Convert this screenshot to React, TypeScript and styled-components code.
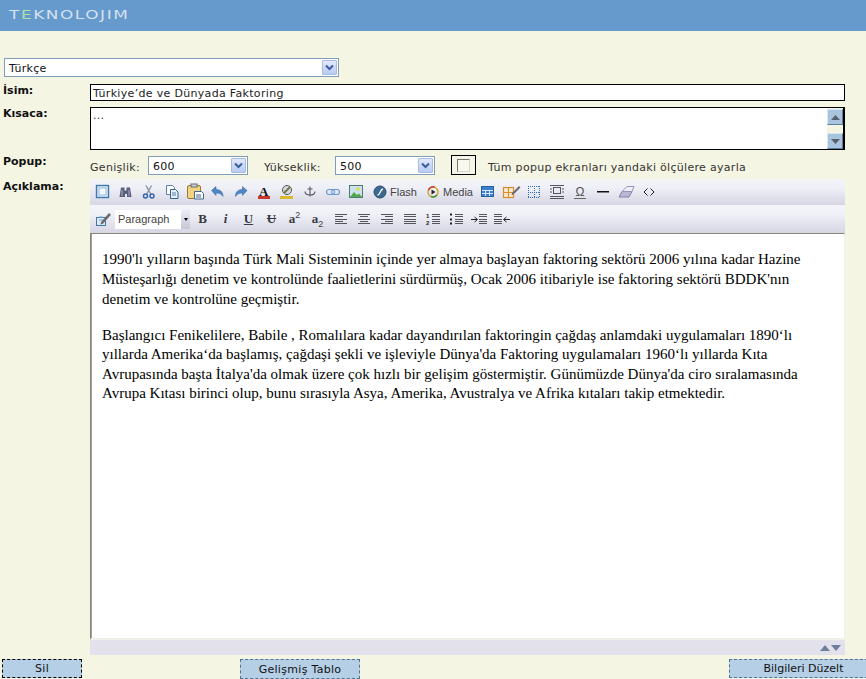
import React from "react";
import styled, { createGlobalStyle } from "styled-components";

const Global = createGlobalStyle`
  html, body { margin: 0; padding: 0; overflow: hidden; background: #f5f5e3; }
  body { font-family: "DejaVu Sans", Verdana, sans-serif; font-size: 11px; color: #222; }
  * { box-sizing: border-box; }
`;

const Page = styled.div`
  width: 866px;
  height: 679px;
  overflow: hidden;
  display: flex;
  flex-direction: column;
`;
const Header = styled.header`
  height: 31px;
  flex: none;
  background: #6699cc;
  padding: 7px 0 0 9px;
`;
const Logo = styled.div`
  font-family: "DejaVu Sans", sans-serif;
  font-weight: 400;
  font-size: 13px;
  line-height: 16px;
  letter-spacing: 1.2px;
  color: #d4e2f0;
  transform: scaleX(1.3);
  transform-origin: left center;
  & > span { color: #aee0a8; }
`;
const Content = styled.main`
  display: flex;
  flex-direction: column;
  padding-top: 27px;
`;
const FakeSelect = styled.div<{ $w: number }>`
  width: ${(p) => p.$w}px;
  height: 19px;
  flex: none;
  border: 1px solid #7f9db9;
  background: #fff;
  display: flex;
  align-items: center;
  justify-content: space-between;
  padding: 1px 1px 1px 4px;
  font-size: 11px;
  letter-spacing: 0.3px;
  color: #111;
`;
const SelectValue = styled.span`
  margin-top: 2px;
`;
const SelectArrow = styled.span`
  width: 15px;
  height: 15px;
  border: 1px solid #a9bcdf;
  border-radius: 1px;
  background: linear-gradient(#e1e9fb, #b9cbf3);
  display: flex;
  align-items: center;
  justify-content: center;
`;
const LangRow = styled.div`
  padding-left: 4px;
`;
const Row = styled.div<{ $mt: number }>`
  display: flex;
  align-items: flex-start;
  margin-top: ${(p) => p.$mt}px;
`;
const Label = styled.label<{ $top?: number }>`
  width: 90px;
  flex: none;
  padding-left: 3px;
  padding-top: ${(p) => p.$top ?? 0}px;
  font-weight: 700;
  font-size: 11px;
  line-height: 13px;
  color: #111;
`;
const TextInput = styled.input`
  width: 755px;
  height: 17px;
  border: 1px solid #000;
  padding: 2px 2px 0;
  background: #fff;
  font: 11px "DejaVu Sans", sans-serif;
  letter-spacing: 0.32px;
  color: #222;
  outline: none;
  display: block;
`;
const AreaBox = styled.div`
  width: 755px;
  height: 43px;
  border: 1px solid #000;
  background: #fff;
  display: flex;
`;
const Area = styled.textarea`
  flex: 1;
  border: 0;
  resize: none;
  outline: none;
  overflow: hidden;
  padding: 1px 2px;
  font: 11px "DejaVu Sans", sans-serif;
  letter-spacing: 0.3px;
  color: #333;
`;
const ScrollTrack = styled.div`
  width: 17px;
  flex: none;
  background: #f5f5e3;
  border-right: 1px solid #000;
  padding-top: 1px;
  display: flex;
  flex-direction: column;
  justify-content: space-between;
`;
const ScrollBtn = styled.div`
  height: 16px;
  background: #a9c4df;
  border: 1px solid;
  border-color: #dbe7f2 #5d7e9e #5d7e9e #dbe7f2;
  display: flex;
  align-items: center;
  justify-content: center;
`;
const PopupControls = styled.div`
  display: flex;
  align-items: center;
  height: 20px;
`;
const FieldText = styled.span<{ $ml?: number; $w?: number }>`
  margin-left: ${(p) => p.$ml ?? 0}px;
  width: ${(p) => (p.$w ? `${p.$w}px` : "auto")};
  flex: none;
  font-size: 11px;
  letter-spacing: 0.3px;
  color: #333;
  white-space: nowrap;
  padding-top: 4px;
`;
const CheckFrame = styled.span`
  width: 25px;
  height: 20px;
  margin-left: 16px;
  flex: none;
  border: 1px solid #000;
  display: flex;
  align-items: center;
  justify-content: center;
`;
const CheckBox = styled.span`
  width: 13px;
  height: 13px;
  background: #f8f8f0;
  border: 1px solid;
  border-color: #777 #d8d8d0 #d8d8d0 #777;
  display: block;
`;
const Editor = styled.div`
  width: 755px;
  display: flex;
  flex-direction: column;
`;
const ToolRow = styled.div<{ $h: number }>`
  height: ${(p) => p.$h}px;
  display: flex;
  align-items: center;
  padding-left: 1px;
  background: linear-gradient(#f4f4fa, #efeff7 35%, #d6d6e4);
`;
const ToolBtn = styled.span<{ $w?: number }>`
  width: ${(p) => p.$w ?? 23}px;
  height: 22px;
  flex: none;
  display: flex;
  align-items: center;
  justify-content: center;
  gap: 2px;
  font: 11px "Liberation Sans", Arial, sans-serif;
  color: #444;
`;
const ToolLetter = styled.span<{ $italic?: boolean; $under?: boolean; $strike?: boolean }>`
  font: bold 13px "Liberation Serif", serif;
  font-style: ${(p) => (p.$italic ? "italic" : "normal")};
  text-decoration: ${(p) => (p.$under ? "underline" : p.$strike ? "line-through" : "none")};
  color: #3a3a42;
  & sup, & sub { font: 9px "Liberation Sans", sans-serif; line-height: 0; color: #444; }
`;
const FormatSelect = styled.span`
  width: 75px;
  height: 19px;
  margin: 0 1px;
  flex: none;
  background: #fff;
  display: flex;
  align-items: center;
  justify-content: space-between;
  padding-left: 3px;
  font: 11px "Liberation Sans", Arial, sans-serif;
  color: #444;
`;
const FormatArrow = styled.span`
  width: 9px;
  height: 100%;
  background: linear-gradient(#ecedf4, #c5c6d6);
  display: flex;
  align-items: center;
  justify-content: center;
  &::after {
    content: "";
    border: 2.5px solid transparent;
    border-top: 3px solid #000;
    border-bottom: 0;
  }
`;
const Doc = styled.div`
  height: 407px;
  background: #fff;
  border: 1px solid;
  border-width: 1px 1px 2px 1px;
  border-color: #85857a #f0f0e6 #f0f0e6 #85857a;
  box-shadow: inset 1px 0 0 #a0a098;
  padding: 15px 20px 0 11px;
  font: 15px/20px "Liberation Serif", "Times New Roman", serif;
  color: #000;
  overflow: hidden;
`;
const Para = styled.p<{ $mt?: number }>`
  margin: ${(p) => p.$mt ?? 0}px 0 0 0;
`;
const Tight = styled(Para)`
  line-height: 19.3px;
`;
const Status = styled.div`
  height: 15px;
  background: #e3e2ec;
  display: flex;
  align-items: center;
  justify-content: flex-end;
  gap: 1px;
  padding-right: 4px;
`;
const Footer = styled.footer`
  display: flex;
  margin-top: 4px;
`;
const ActionButton = styled.button<{ $w: number; $ml: number; $dark?: boolean; $h?: number; $ls?: number }>`
  width: ${(p) => p.$w}px;
  height: ${(p) => p.$h ?? 20}px;
  margin-left: ${(p) => p.$ml}px;
  flex: none;
  background: #b5cfe6;
  border: 1px dashed ${(p) => (p.$dark ? "#000" : "#4f7590")};
  font: 11px "DejaVu Sans", sans-serif;
  letter-spacing: ${(p) => p.$ls ?? 0.3}px;
  color: #111;
  padding: 0;
  text-align: center;
`;

const Svg = styled.svg`
  display: block;
  flex: none;
`;

const I: React.FC<{ children: React.ReactNode; w?: number }> = ({ children, w = 20 }) => (
  <Svg width={w} height={20} viewBox={`0 0 ${w} 20`} fill="none">
    {children}
  </Svg>
);

const lines = (rows: [number, number, number][], color = "#55555e") =>
  rows.map(([x1, x2, y], i) => <path key={i} d={`M${x1} ${y + 0.5}H${x2}`} stroke={color} />);

const Row1: { key: string; w?: number; label?: string; icon: React.ReactNode }[] = [
  { key: "fullscreen", icon: <I><rect x="3.5" y="3.5" width="12" height="12" fill="#dbe8f6" stroke="#3f78ad" strokeWidth="1.4" /><rect x="6" y="6" width="7" height="7" fill="#f4f8fd" stroke="#9dbcd9" /></I> },
  { key: "find", icon: <I><path d="M5 5.500h3.500v3h2v-3H14l1.500 9.500h-4.500v-3H9v3H3.500z" fill="#5a5f7c" /><path d="M6 8v6M13 8v6" stroke="#a6abc8" /></I> },
  { key: "cut", icon: <I><path d="M7 3.500l5 9M12.500 3.500l-5 9" stroke="#8b93a8" strokeWidth="1.400" /><circle cx="6.500" cy="14" r="2" stroke="#3366b0" strokeWidth="1.500" /><circle cx="13" cy="14" r="2" stroke="#3366b0" strokeWidth="1.500" /></I> },
  { key: "copy", icon: <I><path d="M4.500 3.500h6l2 2v7h-8z" fill="#fff" stroke="#5f7fa8" /><path d="M8.500 7.500h5l2.500 2.500v6.500H8.500z" fill="#e9f0fa" stroke="#39638f" /><path d="M10 11h4M10 13h4" stroke="#5f7fa8" /></I> },
  { key: "paste", icon: <I w={22}><rect x="3.500" y="3.500" width="13" height="13" rx="1.500" fill="#f1d382" stroke="#9a7a34" /><rect x="7" y="2" width="6" height="3" fill="#c9cfd8" stroke="#6a6a6a" /><path d="M10.500 9.500h7l2 2v5.500h-9z" fill="#fff" stroke="#47668f" /><path d="M12 13h5M12 15h5" stroke="#47668f" /></I> },
  { key: "undo", icon: <I><path d="M3.500 8.500L8 4.500v3c4 0 7 2 7 7-1.500-2.500-3.500-3.500-7-3.500v2.500z" fill="#4f86c6" stroke="#3a6ea8" strokeWidth=".6" /></I> },
  { key: "redo", icon: <I><path d="M16 8.500L11.500 4.500v3c-4 0-7 2-7 7 1.500-2.500 3.500-3.500 7-3.500v2.500z" fill="#4f86c6" stroke="#3a6ea8" strokeWidth=".6" /></I> },
  { key: "color", icon: <I><text x="5" y="13.500" fontFamily="Liberation Serif" fontWeight="700" fontSize="13" fill="#111">A</text><rect x="4" y="14" width="12" height="3" fill="#c8372d" /></I> },
  { key: "hilite", icon: <I><circle cx="10" cy="8" r="4.500" fill="#d8dbe2" stroke="#555" /><path d="M7 11l6-6" stroke="#6e7a48" strokeWidth="2" /><rect x="3" y="14" width="13" height="3" fill="#dbb92e" /></I> },
  { key: "anchor", icon: <I><path d="M10 4.500v10M5 9.500c0 2.500 2 3.500 5 3.500s5-1 5-3.500M7.500 7h5" stroke="#55555e" strokeWidth="1.100" /></I> },
  { key: "link", icon: <I><rect x="3.500" y="7.500" width="8" height="5" rx="2.500" stroke="#6a9bd6" strokeWidth="1.200" /><rect x="8.500" y="7.500" width="8" height="5" rx="2.500" stroke="#6a9bd6" strokeWidth="1.200" /><path d="M7 10h6" stroke="#b4cdea" /></I> },
  { key: "image", icon: <I><rect x="3.500" y="3.500" width="13" height="12" fill="#cbe3ef" stroke="#4e7a70" strokeWidth="1" /><circle cx="12" cy="7" r="1.800" fill="#e8d84c" /><path d="M4 15l4-5 3 3 2-1.500 3 3.500z" fill="#54a64a" /></I> },
  { key: "flash", w: 55, label: "Flash", icon: <I w={16}><circle cx="8" cy="10" r="6" fill="#3c6a92" stroke="#2a4a68" /><path d="M5.500 13c3 0 2.500-6 5.500-6" stroke="#fff" strokeWidth="1.300" /></I> },
  { key: "media", w: 54, label: "Media", icon: <I w={16}><circle cx="8" cy="10" r="5" stroke="#d9a22a" strokeWidth="1.500" /><path d="M3.500 8a5 5 0 0 1 6-3" stroke="#c8372d" strokeWidth="1.500" /><path d="M12 13a5 5 0 0 1-6 1.500" stroke="#3f9a44" strokeWidth="1.500" /><path d="M6.500 7.500l4 2.500-4 2.500z" fill="#222" /></I> },
  { key: "table", icon: <I><rect x="3.500" y="4.500" width="12" height="10" fill="#3a7fd0" stroke="#2a5f9f" /><path d="M4 8.500h11M4 11.500h11M7.500 8v6M11.500 8v6" stroke="#d6e6f8" /></I> },
  { key: "tableedit", icon: <I w={24}><rect x="4.500" y="5.500" width="10" height="10" fill="#fbeccf" stroke="#d98c2b" strokeWidth="1.200" /><path d="M9.500 5.500v10M4.500 10.500h10" stroke="#d98c2b" strokeWidth="1.200" /><path d="M13 11l7-7 1.500 1.500-7 7-2 .5z" fill="#6b6b70" /></I> },
  { key: "visual", icon: <I><path d="M4 4.500h12M4 10.500h12M4 15.500h12M4.500 4v12M10.500 4v12M15.500 4v12" stroke="#2f6cb3" strokeDasharray="1 1" /></I> },
  { key: "template", icon: <I>{lines([[3, 17, 3], [3, 17, 14], [3, 17, 16]])}<rect x="6.500" y="5.500" width="7" height="6" stroke="#55555e" /><path d="M3 7h2M3 10h2M15 7h2M15 10h2" stroke="#55555e" /></I> },
  { key: "omega", icon: <I><text x="10" y="13.500" textAnchor="middle" fontFamily="Liberation Sans" fontSize="12" fill="#555">Ω</text><path d="M4 16.500h12" stroke="#666" /></I> },
  { key: "hr", icon: <I><rect x="4" y="9" width="12" height="1.500" fill="#111" /></I> },
  { key: "eraser", icon: <I><path d="M3 15l3-5.500h10L13 15z" fill="#b9b9d6" stroke="#8080a8" /><path d="M6 9.500l5-5h7l-2 5z" fill="#eeeef6" stroke="#9494b4" /></I> },
  { key: "code", icon: <I><path d="M8.500 6.500L5 10l3.500 3.500M11.500 6.500L15 10l-3.500 3.500" stroke="#222" strokeWidth="1" /></I> },
];

const ALIGN: Record<string, [number, number, number][]> = {
  left: [[4, 16, 5], [4, 12, 7], [4, 16, 10], [4, 12, 12], [4, 16, 14]],
  center: [[4, 16, 5], [6, 14, 7], [4, 16, 10], [6, 14, 12], [4, 16, 14]],
  right: [[4, 16, 5], [8, 16, 7], [4, 16, 10], [8, 16, 12], [4, 16, 14]],
  full: [[4, 16, 5], [4, 16, 7], [4, 16, 10], [4, 16, 12], [4, 16, 14]],
};

const Up = () => <Svg width={10} height={6} viewBox="0 0 10 6"><path d="M0 6L5 0l5 6z" fill="#6d7f9c" /></Svg>;
const Down = () => <Svg width={10} height={6} viewBox="0 0 10 6"><path d="M0 0l5 6 5-6z" fill="#6d7f9c" /></Svg>;
const Chevron = () => (
  <Svg width={9} height={7} viewBox="0 0 9 7"><path d="M1 1.500l3.500 3.500L8 1.500" stroke="#3a5d9c" strokeWidth="2" fill="none" /></Svg>
);

const Select: React.FC<{ w: number; value: string }> = ({ w, value }) => (
  <FakeSelect $w={w}>
    <SelectValue>{value}</SelectValue>
    <SelectArrow><Chevron /></SelectArrow>
  </FakeSelect>
);

export default function App() {
  return (
    <Page>
      <Global />
      <Header><Logo>T<span>E</span>KNOLOJIM</Logo></Header>
      <Content>
        <LangRow><Select w={335} value="Türkçe" /></LangRow>
        <Row $mt={7}>
          <Label>İsim:</Label>
          <TextInput readOnly value="Türkiye’de ve Dünyada Faktoring" />
        </Row>
        <Row $mt={6}>
          <Label>Kısaca:</Label>
          <AreaBox>
            <Area readOnly value="..." />
            <ScrollTrack>
              <ScrollBtn><Svg width={9} height={5} viewBox="0 0 9 5"><path d="M0 5L4.500 0 9 5z" fill="#55606e" /></Svg></ScrollBtn>
              <ScrollBtn><Svg width={9} height={5} viewBox="0 0 9 5"><path d="M0 0l4.500 5L9 0z" fill="#55606e" /></Svg></ScrollBtn>
            </ScrollTrack>
          </AreaBox>
        </Row>
        <Row $mt={5}>
          <Label>Popup:</Label>
          <PopupControls>
            <FieldText $w={58}>Genişlik:</FieldText>
            <Select w={100} value="600" />
            <FieldText $ml={16} $w={71}>Yükseklik:</FieldText>
            <Select w={100} value="500" />
            <CheckFrame><CheckBox /></CheckFrame>
            <FieldText $ml={12}>Tüm popup ekranları yandaki ölçülere ayarla</FieldText>
          </PopupControls>
        </Row>
        <Row $mt={4}>
          <Label $top={1}>Açıklama:</Label>
          <Editor>
            <ToolRow $h={26}>
              {Row1.map((b) => (
                <ToolBtn key={b.key} $w={b.w}>{b.icon}{b.label}</ToolBtn>
              ))}
            </ToolRow>
            <ToolRow $h={28}>
              <ToolBtn>
                <I><rect x="3.500" y="8.500" width="9" height="8" fill="#dfeaf6" stroke="#3f78ad" /><path d="M6 8h4M6 11h4" stroke="#7aa0c8" /><path d="M8 13l8-9 2 1.800-8 9-2.500.7z" fill="#6b6b70" /></I>
              </ToolBtn>
              <FormatSelect>Paragraph<FormatArrow /></FormatSelect>
              <ToolBtn><ToolLetter>B</ToolLetter></ToolBtn>
              <ToolBtn><ToolLetter $italic>i</ToolLetter></ToolBtn>
              <ToolBtn><ToolLetter $under>U</ToolLetter></ToolBtn>
              <ToolBtn><ToolLetter $strike>U</ToolLetter></ToolBtn>
              <ToolBtn><ToolLetter>a<sup>2</sup></ToolLetter></ToolBtn>
              <ToolBtn><ToolLetter>a<sub>2</sub></ToolLetter></ToolBtn>
              {Object.entries(ALIGN).map(([k, r]) => (
                <ToolBtn key={k}><I>{lines(r)}</I></ToolBtn>
              ))}
              <ToolBtn><I>{lines([[9, 17, 5], [9, 17, 7], [9, 17, 10], [9, 17, 12], [9, 17, 14]])}<text x="3" y="9" fontSize="6" fontWeight="700" fontFamily="Liberation Sans" fill="#222">1</text><text x="3" y="16" fontSize="6" fontWeight="700" fontFamily="Liberation Sans" fill="#222">2</text></I></ToolBtn>
              <ToolBtn><I>{lines([[9, 17, 5], [9, 17, 7], [9, 17, 10], [9, 17, 12], [9, 17, 14]])}<path d="M4 4.500h2v2H4zM4 9.500h2v2H4zM4 13.500h2v2H4z" fill="#222" /></I></ToolBtn>
              <ToolBtn><I>{lines([[10, 18, 5], [10, 18, 7], [10, 18, 10], [10, 18, 12], [10, 18, 14]])}<path d="M2 10.500h6M5.500 8l3 2.500-3 2.500" stroke="#222" /></I></ToolBtn>
              <ToolBtn><I>{lines([[2, 10, 5], [2, 10, 7], [2, 10, 10], [2, 10, 12], [2, 10, 14]])}<path d="M12 10.500h6M14.500 8l-3 2.500 3 2.500" stroke="#222" /></I></ToolBtn>
            </ToolRow>
            <Doc>
              <Para>1990'lı yılların başında Türk Mali Sisteminin içinde yer almaya başlayan faktoring sektörü 2006 yılına kadar Hazine Müsteşarlığı denetim ve kontrolünde faalietlerini sürdürmüş, Ocak 2006 itibariyle ise faktoring sektörü BDDK'nın denetim ve kontrolüne geçmiştir.</Para>
              <Tight $mt={17}>Başlangıcı Fenikelilere, Babile , Romalılara kadar dayandırılan faktoringin çağdaş anlamdaki uygulamaları 1890‘lı yıllarda Amerika‘da başlamış, çağdaşi şekli ve işleviyle Dünya'da Faktoring uygulamaları 1960‘lı yıllarda Kıta Avrupasında başta İtalya'da olmak üzere çok hızlı bir gelişim göstermiştir. Günümüzde Dünya'da ciro sıralamasında Avrupa Kıtası birinci olup, bunu sırasıyla Asya, Amerika, Avustralya ve Afrika kıtaları takip etmektedir.</Tight>
            </Doc>
            <Status><Up /><Down /></Status>
          </Editor>
        </Row>
        <Footer>
          <ActionButton $w={80} $ml={2} $dark $h={19}>Sil</ActionButton>
          <ActionButton $w={120} $ml={158}>Gelişmiş Tablo</ActionButton>
          <ActionButton $w={149} $ml={369} $h={19} $ls={0}>Bilgileri Düzelt</ActionButton>
        </Footer>
      </Content>
    </Page>
  );
}
